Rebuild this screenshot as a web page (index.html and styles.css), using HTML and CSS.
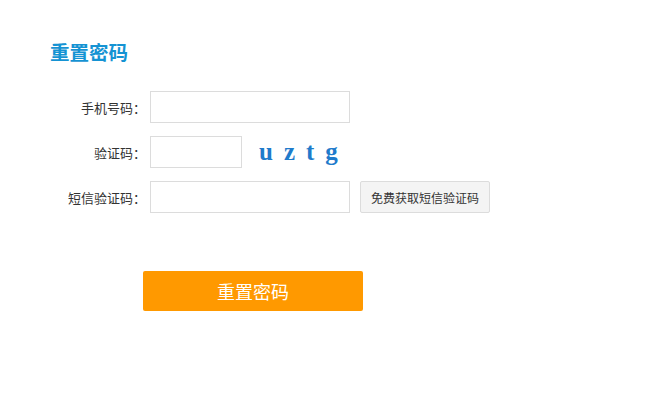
FILE: index.html
```html
<!DOCTYPE html>
<html lang="zh-CN">
<head>
    <meta charset="UTF-8">
    <meta name="viewport" content="width=device-width, initial-scale=1.0">
    <title>重置密码</title>
    <link rel="stylesheet" href="styles.css">
</head>
<body>
    <div class="container">
        <h1 class="title">重置密码</h1>
        <form class="reset-form">
            <div class="form-row">
                <label class="form-label" for="phone">手机号码：</label>
                <input class="form-input" type="text" id="phone">
            </div>
            <div class="form-row">
                <label class="form-label" for="captcha">验证码：</label>
                <input class="form-input short" type="text" id="captcha">
                <div class="captcha-text">
                    <span>u</span><span>z</span><span>t</span><span>g</span>
                </div>
            </div>
            <div class="form-row">
                <label class="form-label" for="smsCode">短信验证码：</label>
                <input class="form-input" type="text" id="smsCode">
                <button type="button" class="sms-btn">免费获取短信验证码</button>
            </div>
            <div class="submit-row">
                <button type="submit" class="submit-btn">重置密码</button>
            </div>
        </form>
    </div>
</body>
</html>
```

FILE: styles.css
```css
body {
    margin: 0;
    font-family: "Liberation Sans", "Noto Sans CJK SC", sans-serif;
    background-color: #fff;
    color: #333;
}
.container {
    padding: 40px 0 0 50px;
}
.title {
    margin: 0 0 25px;
    font-size: 19.5px;
    line-height: 26px;
    font-weight: bold;
    color: #1593d3;
}
.form-row {
    display: flex;
    align-items: center;
    height: 32px;
    margin-bottom: 13px;
}
.form-label {
    width: 96px;
    margin-right: 4px;
    text-align: right;
    font-size: 13px;
    color: #333;
}
.form-input {
    box-sizing: border-box;
    width: 200px;
    height: 32px;
    border: 1px solid #dcdcdc;
    padding: 0 6px;
    font-size: 13px;
    outline: none;
}
.form-input.short {
    width: 92px;
}
.captcha-text {
    display: flex;
    margin-left: 17px;
    font-family: "Liberation Serif", "DejaVu Serif", serif;
    font-weight: bold;
    font-size: 25px;
    color: #1f7bcb;
}
.captcha-text span {
    margin-right: 11px;
}
.sms-btn {
    box-sizing: border-box;
    height: 32px;
    margin-left: 10px;
    padding: 0 10px;
    border: 1px solid #dcdcdc;
    border-radius: 2px;
    background-color: #f4f4f4;
    font-family: inherit;
    font-size: 12px;
    color: #333;
    cursor: pointer;
}
.submit-row {
    padding: 45px 0 0 93px;
}
.submit-btn {
    width: 220px;
    height: 40px;
    border: none;
    border-radius: 2px;
    background-color: #ff9900;
    color: #fff;
    font-family: inherit;
    font-size: 18px;
    cursor: pointer;
}
```
